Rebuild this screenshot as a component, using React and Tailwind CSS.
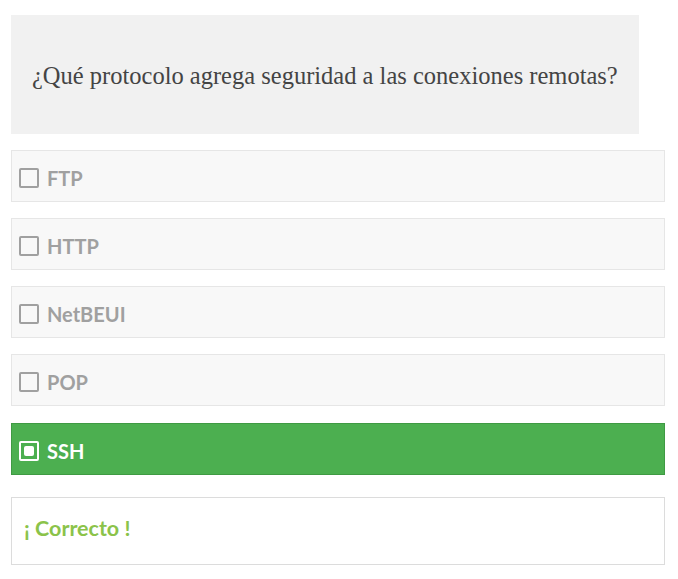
import React from "react";

const options = ["FTP", "HTTP", "NetBEUI", "POP", "SSH"];

function Box({ checked }) {
  if (checked) {
    return (
      <span className="flex h-[20px] w-[20px] shrink-0 items-center justify-center rounded-[2px] border-2 border-white">
        <span className="h-[10px] w-[10px] rounded-[2px] bg-white" />
      </span>
    );
  }
  return <span className="h-[20px] w-[20px] shrink-0 rounded-[2px] border-2 border-[#a0a0a0]" />;
}

export default function App() {
  return (
    <div className="min-h-[579px] bg-white pl-[11px] pt-[15px]" style={{ fontFamily: "Lato, 'Liberation Sans', sans-serif" }}>
      <div
        className="flex h-[119px] w-[628px] items-center bg-[#f1f1f1] pl-[21px] pt-[4px] text-[24.5px] text-[#444]"
        style={{ fontFamily: "'Liberation Serif', serif" }}
      >
        ¿Qué protocolo agrega seguridad a las conexiones remotas?
      </div>
      <div className="mt-[16px] flex w-[654px] flex-col gap-[16px]">
        {options.map((o) => {
          const sel = o === "SSH";
          return (
            <div
              key={o}
              className={
                sel
                  ? "mt-[1px] flex h-[52px] items-center gap-[8px] border border-[#3f9a43] bg-[#4caf50] pl-[7px] pt-[3px] text-[20px] font-bold text-white"
                  : "flex h-[52px] items-center gap-[8px] border border-[#e6e6e6] bg-[#f8f8f8] pl-[7px] pt-[3px] text-[20px] font-bold text-[#a0a0a0]"
              }
            >
              <Box checked={sel} />
              <span>{o}</span>
            </div>
          );
        })}
      </div>
      <div className="mt-[22px] flex h-[68px] w-[654px] items-center border border-[#dcdcdc] pb-[5px] pl-[12px] text-[21.5px] font-bold text-[#8bc34a]">
        ¡ Correcto !
      </div>
    </div>
  );
}
